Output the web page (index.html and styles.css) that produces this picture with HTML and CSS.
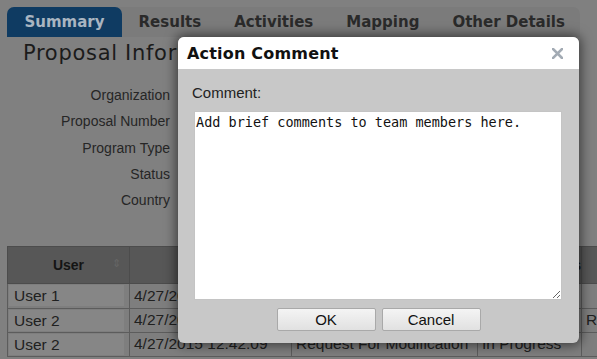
FILE: index.html
```html
<!DOCTYPE html>
<html lang="en">
<head>
  <meta charset="UTF-8" />
  <meta name="viewport" content="width=device-width, initial-scale=1" />
  <title>Proposal Summary</title>
  <link rel="stylesheet" href="styles.css">
</head>
<body>

  <!-- page behind the modal (shown dimmed) -->
  <div class="page">
    <nav class="tabs">
      <a class="tab active">Summary</a>
      <a class="tab">Results</a>
      <a class="tab">Activities</a>
      <a class="tab">Mapping</a>
      <a class="tab">Other Details</a>
    </nav>

    <h1 class="section-title">Proposal Information</h1>

    <dl class="info">
      <dt>Organization</dt><dd></dd>
      <dt>Proposal Number</dt><dd></dd>
      <dt>Program Type</dt><dd></dd>
      <dt>Status</dt><dd></dd>
      <dt>Country</dt><dd></dd>
    </dl>

    <table class="history">
      <colgroup>
        <col class="c-user">
        <col class="c-date">
        <col class="c-action">
        <col class="c-status">
        <col class="c-comment">
      </colgroup>
      <thead>
        <tr>
          <th class="sortable">User <span class="sort-icon">&#8661;</span></th>
          <th>Date</th>
          <th>Action</th>
          <th class="status-head">Current Status</th>
          <th>Comments</th>
        </tr>
      </thead>
      <tbody>
        <tr>
          <td><span class="user-cell">User 1</span></td>
          <td>4/27/2015 12:40:15</td>
          <td>Submitted</td>
          <td>Completed</td>
          <td></td>
        </tr>
        <tr>
          <td><span class="user-cell">User 2</span></td>
          <td>4/27/2015 12:41:30</td>
          <td>Review</td>
          <td>Completed</td>
          <td>Revised budget</td>
        </tr>
        <tr>
          <td><span class="user-cell">User 2</span></td>
          <td>4/27/2015 12:42:09</td>
          <td>Request For Modification</td>
          <td>In Progress</td>
          <td></td>
        </tr>
      </tbody>
    </table>
  </div>

  <!-- Modal -->
  <div class="dialog">
    <div class="dialog-header">
      <span class="dialog-title">Action Comment</span>
      <svg class="dialog-close" width="11" height="11" viewBox="0 0 11 11">
        <path d="M1 1 L10 10 M10 1 L1 10" stroke="#a3abb4" stroke-width="2.6" stroke-linecap="square" />
      </svg>
    </div>
    <div class="dialog-body">
      <label class="comment-label" for="comment">Comment:</label>
      <textarea id="comment">Add brief comments to team members here.</textarea>
      <div class="dialog-buttons">
        <button class="btn">OK</button>
        <button class="btn">Cancel</button>
      </div>
    </div>
  </div>

</body>
</html>
```

FILE: styles.css
```css
body {
  margin: 0;
  width: 597px;
  height: 359px;
  overflow: hidden;
  font-family: "Liberation Sans", Arial, sans-serif;
  background: #808080;
  color: #222;
}

.page {
  padding: 7px 0 0 7px;
}

/* tabs */
.tabs {
  display: flex;
  width: 573px;
  height: 30px;
  background: #7b7b7b;
  border-radius: 7px 7px 0 0;
}

.tab {
  display: flex;
  flex-shrink: 0;
  align-items: center;
  padding: 0 16.5px;
  font-family: "DejaVu Sans", Verdana, sans-serif;
  font-weight: bold;
  font-size: 15px;
  color: #2a2a2a;
  white-space: nowrap;
}

.tab.active {
  padding: 0 17.5px;
  background: #0f3b62;
  color: #a9b5c1;
  border-radius: 7px 7px 0 0;
}

.section-title {
  margin: 4px 0 0 16px;
  font-family: "DejaVu Sans", Verdana, sans-serif;
  font-weight: normal;
  font-size: 21px;
  letter-spacing: 0.7px;
  line-height: 25px;
  color: #1b1b1b;
  white-space: nowrap;
}

/* info list */
.info {
  display: grid;
  grid-template-columns: 163px 1fr;
  column-gap: 15px;
  margin: 16px 0 0 0;
  font-size: 14px;
  line-height: 26.25px;
}

.info dt {
  text-align: right;
  color: #262626;
}

.info dd {
  margin: 0;
}

/* history table */
.history {
  width: 800px;
  margin-top: 33px;
  table-layout: fixed;
  border-collapse: collapse;
  font-size: 15.5px;
}

.c-user { width: 122px; }
.c-date { width: 162px; }
.c-action { width: 186px; }
.c-status { width: 104px; }
.c-comment { width: 226px; }

.history th {
  position: relative;
  height: 36px;
  padding: 0;
  background: #575757;
  border: 1px solid #4c4c4c;
  font-size: 14px;
  color: #141414;
  white-space: nowrap;
}

.history th.status-head {
  text-align: right;
  overflow: visible;
}

.sort-icon {
  position: absolute;
  right: 8px;
  top: 10px;
  font-size: 11px;
  font-weight: normal;
  color: #666;
}

.history tbody tr {
  height: 24.3px;
}

.history td {
  padding: 0 4px;
  line-height: 18px;
  background: #7e7e7e;
  border: 1px solid #5c5c5c;
  color: #202020;
  white-space: nowrap;
  overflow: hidden;
}

.history td:first-child {
  padding: 0 5px 0 1px;
}

.user-cell {
  display: block;
  padding: 0 5px;
  line-height: 21px;
  background: #868686;
}

/* dialog */
.dialog {
  position: absolute;
  left: 178px;
  top: 37px;
  width: 401px;
  border-radius: 6px;
  background: #c8c8c8;
  box-shadow: 0 0 12px 2px rgba(0, 0, 0, 0.55);
  overflow: hidden;
}

.dialog-header {
  display: flex;
  align-items: center;
  justify-content: space-between;
  height: 32px;
  padding: 0 16px 0 9px;
  background: #fff;
}

.dialog-title {
  font-family: "DejaVu Sans", Verdana, sans-serif;
  font-weight: bold;
  font-size: 16px;
  letter-spacing: 0.2px;
  color: #111;
}

.dialog-body {
  padding: 15px 17px 12px 14px;
}

.comment-label {
  display: block;
  font-size: 15px;
  line-height: 17px;
  color: #222;
}

.dialog-body textarea {
  display: block;
  box-sizing: border-box;
  width: 368px;
  height: 189px;
  margin: 10px 0 0 2px;
  padding: 2px 1px;
  border: 1px solid #c4c4c4;
  background: #fff;
  font-family: "DejaVu Sans Mono", Consolas, monospace;
  font-size: 13.5px;
  color: #111;
}

.dialog-buttons {
  display: flex;
  justify-content: center;
  gap: 6px;
  margin: 8px -17px 0 -14px;
}

.btn {
  width: 99px;
  height: 23px;
  padding: 0;
  border: 1px solid #a9a9a9;
  border-radius: 2px;
  background: linear-gradient(#f4f4f4, #e1e1e1);
  font-family: "Liberation Sans", Arial, sans-serif;
  font-size: 15px;
  color: #111;
}
```
